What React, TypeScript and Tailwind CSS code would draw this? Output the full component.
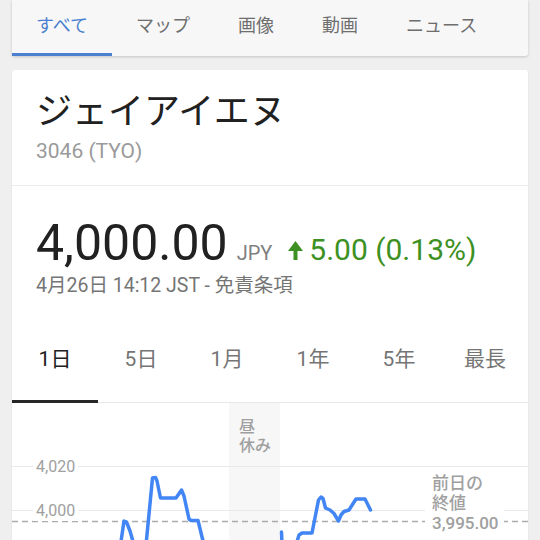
import React from "react";

const font = "font-['Roboto','Noto_Sans_CJK_JP',sans-serif]";

const searchTabs = ["すべて", "マップ", "画像", "動画", "ニュース"];
const rangeTabs = ["1日", "5日", "1月", "1年", "5年", "最長"];

// chart coords: origin at card left (x=12) and chart top (y=403)
const morning =
  "M108.5 142 L112 118 L114.5 119 L118 128 L122 142 L128 155 L134 142 L140.5 75 L143.5 74.5 L145 78 L148.5 95 L164 95 L169.5 87 L172 93 L177 116 L179 117.5 L186 117.5 L192 142 L198 155 L217 155";
const afternoon =
  "M269.5 129 L270 142 L278 155 L284 142 L287 132 L290 130 L300 130 L306.5 97 L309 94 L311 95.5 L313.5 105 L318 107 L322 110.5 L326.5 118 L329 112 L332 108.5 L337 107 L344 96 L353 96 L358.5 107";

function UpArrow() {
  return (
    <svg width="15" height="19" viewBox="0 0 15 19" className="ml-4 mr-[6px] mb-[4px]">
      <polygon points="0,10 7.5,0 15,10" fill="#3d9022" />
      <rect x="5.5" y="9" width="4" height="10" fill="#3d9022" />
    </svg>
  );
}

function Chart() {
  return (
    <div className="relative h-[150px] overflow-hidden">
      <svg width="516" height="150" viewBox="0 0 516 150" className="absolute left-0 top-0">
        <rect x="217" y="0" width="51" height="150" fill="#f7f7f7" />
        <line x1="0" y1="63.5" x2="516" y2="63.5" stroke="#e9e9e9" strokeWidth="1" />
        <line x1="0" y1="107.5" x2="516" y2="107.5" stroke="#e9e9e9" strokeWidth="1" />
        <line x1="0" y1="118.5" x2="516" y2="118.5" stroke="#ababab" strokeWidth="1.5" strokeDasharray="6 4" />
        <path d={morning} fill="none" stroke="#4285f4" strokeWidth="3.5" strokeLinejoin="round" strokeLinecap="round" />
        <path d={afternoon} fill="none" stroke="#4285f4" strokeWidth="3.5" strokeLinejoin="round" strokeLinecap="round" />
      </svg>

      <div className="absolute left-[227px] top-[14px] text-[16px] leading-[19px] font-medium text-[#a0a0a0]">
        昼<br />休み
      </div>

      <div className="absolute left-[21px] top-[54px] bg-white px-[3px] text-[16px] leading-[20px] text-[#a0a0a0]">
        4,020
      </div>
      <div className="absolute left-[21px] top-[98px] bg-white px-[3px] text-[16px] leading-[20px] text-[#a0a0a0]">
        4,000
      </div>

      <div className="absolute left-[413px] top-[70px] bg-white pl-[7px] pr-[5px] text-[17px] leading-[20px] font-medium text-[#a0a0a0]">
        前日の
        <br />
        終値
        <br />
        3,995.00
      </div>
    </div>
  );
}

export default function App() {
  return (
    <div className={`min-h-screen bg-[#efefef] px-3 ${font}`}>
      {/* Search tabs */}
      <div className="flex h-[56px] bg-[#f7f7f7] rounded-b-[3px] shadow-[0_1px_3px_rgba(0,0,0,0.18)]">
        {searchTabs.map((t, i) => (
          <div
            key={t}
            className={`px-6 pt-[14px] text-[18px] leading-[24px] border-b-[3px] ${
              i === 0 ? "text-[#4a80cf] border-[#4a80cf]" : "text-[#6e6e6e] border-transparent"
            }`}
          >
            {t}
          </div>
        ))}
      </div>

      {/* Quote card */}
      <div className="mt-[14px] bg-white rounded-t-[3px] shadow-[0_1px_2px_rgba(0,0,0,0.1)]">
        <div className="px-6 pt-[20px] pb-[22px] border-b border-[#ebebeb]">
          <h1 className="text-[36px] leading-[44px] text-[#212121]">ジェイアイエヌ</h1>
          <div className="mt-[5px] text-[21px] leading-[24px] text-[#9a9a9a]">3046 (TYO)</div>
        </div>

        <div className="px-6 pt-[29px]">
          <div className="flex items-baseline">
            <span className="text-[50px] leading-[56px] text-[#212121]">4,000.00</span>
            <span className="ml-[9px] text-[20px] leading-[24px] text-[#808080]">JPY</span>
            <UpArrow />
            <span className="text-[30px] leading-[36px] text-[#3d9022]">5.00 (0.13%)</span>
          </div>
          <div className="mt-[3px] text-[19.5px] leading-[24px] text-[#757575]">
            4月26日 14:12 JST - 免責条項
          </div>
        </div>

        <div className="flex mt-[49px] border-b border-[#e8e8e8]">
          {rangeTabs.map((t, i) => (
            <div
              key={t}
              className={`flex-1 -mb-px text-center pb-[29px] text-[21px] leading-[24px] border-b-[3px] ${
                i === 0 ? "text-[#212121] border-[#262626]" : "text-[#757575] border-transparent"
              }`}
            >
              {t}
            </div>
          ))}
        </div>

        <Chart />
      </div>
    </div>
  );
}
